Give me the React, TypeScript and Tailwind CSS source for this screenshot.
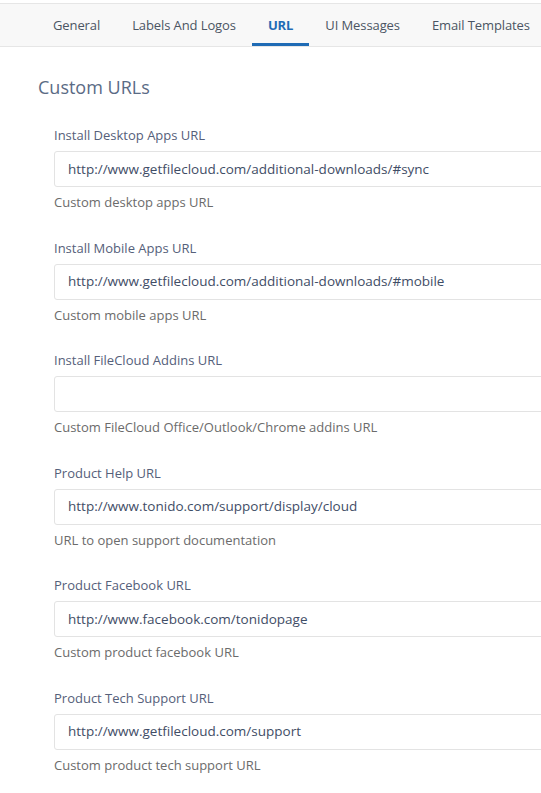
const fields = [
  {
    label: "Install Desktop Apps URL",
    value: "http://www.getfilecloud.com/additional-downloads/#sync",
    help: "Custom desktop apps URL",
  },
  {
    label: "Install Mobile Apps URL",
    value: "http://www.getfilecloud.com/additional-downloads/#mobile",
    help: "Custom mobile apps URL",
  },
  {
    label: "Install FileCloud Addins URL",
    value: "",
    help: "Custom FileCloud Office/Outlook/Chrome addins URL",
  },
  {
    label: "Product Help URL",
    value: "http://www.tonido.com/support/display/cloud",
    help: "URL to open support documentation",
  },
  {
    label: "Product Facebook URL",
    value: "http://www.facebook.com/tonidopage",
    help: "Custom product facebook URL",
  },
  {
    label: "Product Tech Support URL",
    value: "http://www.getfilecloud.com/support",
    help: "Custom product tech support URL",
  },
];

const tabs = ["General", "Labels And Logos", "URL", "UI Messages", "Email Templates"];

export default function App() {
  return (
    <div className="h-[793px] w-[541px] overflow-hidden bg-white font-['Open_Sans',sans-serif]">
      <div className="mt-[3px] flex h-[44px] border-y border-[#e6e6e6] bg-[#f8f8f8] pl-[37px]">
        {tabs.map((tab) => (
          <div
            key={tab}
            className={`flex items-center whitespace-nowrap border-b-[3px] px-4 pt-[4px] text-[13px] tracking-[-0.1px] ${
              tab === "URL"
                ? "border-[#1f6bb5] font-bold text-[#1f6bb5]"
                : "border-transparent text-[#4b5563]"
            }`}
          >
            {tab}
          </div>
        ))}
      </div>

      <div className="pl-[38px] pt-[28px]">
        <h2 className="text-[18px] leading-[24px] text-[#5a6b85]">Custom URLs</h2>

        <div className="pl-4 pt-[27px]">
          {fields.map((f) => (
            <div key={f.label} className="mb-[27.5px]">
              <label className="block text-[13px] leading-[18px] text-[#55607a]">{f.label}</label>
              <div className="mt-[7px] flex h-[36px] w-[600px] items-center rounded-[3px] border border-[#e3e3e3] bg-white pl-[13px] text-[13.5px] text-[#3f4d66]">
                {f.value}
              </div>
              <p className="mt-[6px] text-[13px] leading-[18px] text-[#6b6b6b]">{f.help}</p>
            </div>
          ))}
        </div>
      </div>
    </div>
  );
}
